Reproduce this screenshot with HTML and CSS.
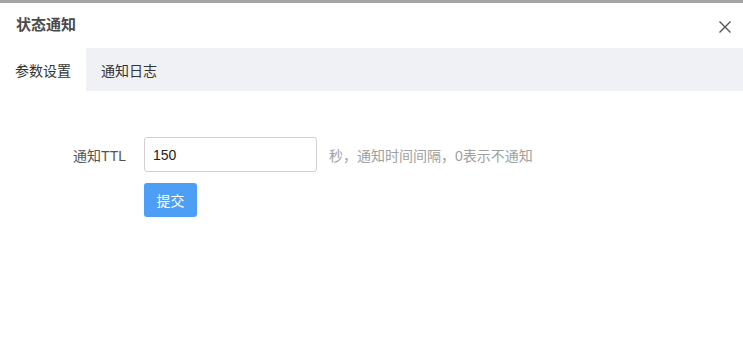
FILE: index.html
```html
<!DOCTYPE html>
<html lang="zh-CN">
<head>
<meta charset="utf-8">
<title>状态通知</title>
<link rel="stylesheet" href="styles.css">
</head>
<body>
<div class="topline"></div>
<div class="dialog">
  <header class="dialog-header">
    <h1 class="dialog-title">状态通知</h1>
    <button class="close-btn" aria-label="关闭">
      <svg width="12" height="12" viewBox="0 0 12 12"><path d="M0.5 0.5 L11.5 11.5 M11.5 0.5 L0.5 11.5" stroke="#555" stroke-width="1.4" fill="none"/></svg>
    </button>
  </header>
  <nav class="tabs">
    <div class="tab active">参数设置</div>
    <div class="tab">通知日志</div>
  </nav>
  <main class="content">
    <div class="form-row">
      <label class="form-label">通知TTL</label>
      <input class="form-input" type="text" value="150">
      <span class="form-hint">秒，通知时间间隔，0表示不通知</span>
    </div>
    <div class="form-row actions">
      <button class="submit-btn">提交</button>
    </div>
  </main>
</div>
</body>
</html>
```

FILE: styles.css
```css
* { box-sizing: border-box; }
html, body {
  margin: 0;
  padding: 0;
  background: #fff;
  font-family: "Liberation Sans", "Noto Sans CJK SC", sans-serif;
}
.topline {
  height: 3px;
  background: #a3a3a3;
}
.dialog {
  background: #fff;
}
.dialog-header {
  height: 45px;
  display: flex;
  align-items: center;
  justify-content: space-between;
  padding: 0 6px 0 16px;
}
.dialog-title {
  margin: 0;
  font-size: 15px;
  font-weight: bold;
  color: #4a4a4a;
  line-height: 1;
  position: relative;
  top: -1px;
}
.close-btn {
  width: 24px;
  height: 24px;
  border: 0;
  background: transparent;
  padding: 0;
  display: flex;
  align-items: center;
  justify-content: center;
  cursor: pointer;
  position: relative;
  top: 1px;
}
.tabs {
  display: flex;
  height: 43px;
  background: #f0f1f5;
}
.tab {
  padding: 0 15px;
  display: flex;
  align-items: center;
  font-size: 14px;
  color: #333;
}
.tab.active {
  background: #fff;
}
.content {
  padding: 46px 0 0 0;
}
.form-row {
  display: flex;
  align-items: center;
}
.form-label {
  width: 126px;
  text-align: right;
  font-size: 14px;
  color: #555;
  margin-right: 18px;
}
.form-input {
  width: 173px;
  height: 35px;
  border: 1px solid #d0d0d0;
  border-radius: 3px;
  padding: 0 8px;
  font-size: 14px;
  font-family: "Liberation Sans", "Noto Sans CJK SC", sans-serif;
  color: #222;
  outline: none;
}
.form-hint {
  margin-left: 12px;
  font-size: 14px;
  color: #a0a0a0;
}
.actions {
  padding-left: 144px;
  margin-top: 11px;
}
.submit-btn {
  width: 53px;
  height: 34px;
  border: 0;
  border-radius: 3px;
  background: #4d9ef5;
  color: #fff;
  font-size: 14px;
  font-family: "Liberation Sans", "Noto Sans CJK SC", sans-serif;
  padding: 0;
}
```
